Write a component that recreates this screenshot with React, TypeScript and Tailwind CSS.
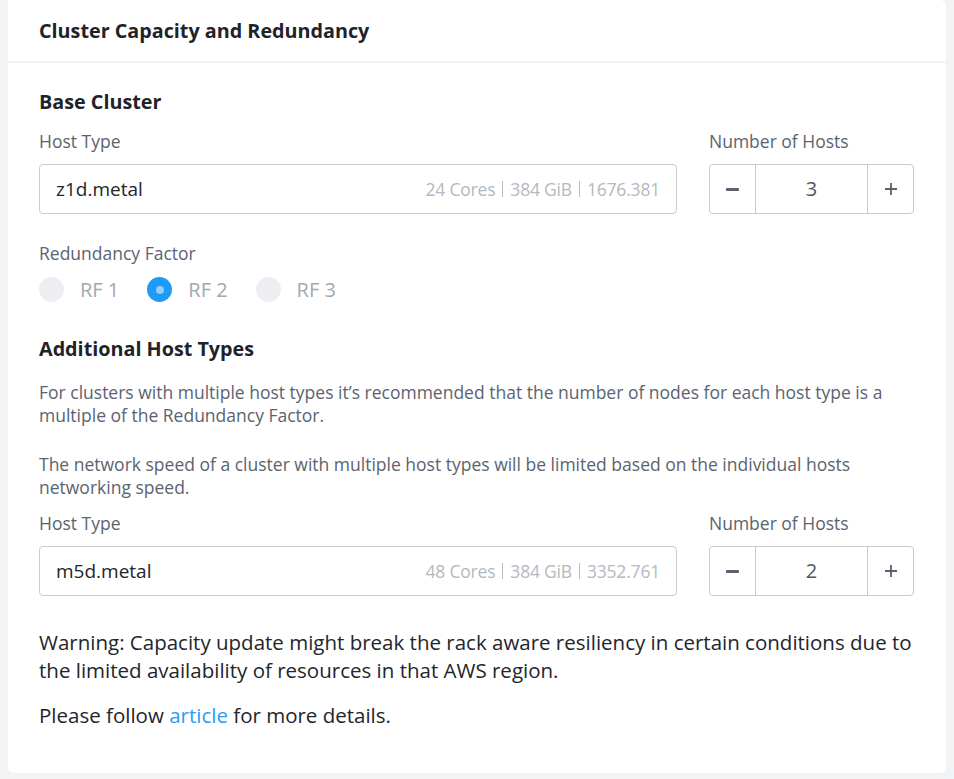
import React from "react";

const font = { fontFamily: "'Open Sans', Lato, Arial, sans-serif" };

function HostRow({ value, info, count }: { value: string; info: string[]; count: number }) {
  return (
    <div className="flex items-start gap-[32px]">
      <div className="flex-1">
        <div className="text-[17.5px] leading-[20px] text-[#5b6370]">Host Type</div>
        <div className="mt-[13px] flex h-[50px] items-center justify-between rounded-[4px] border border-[#c6ccd4] bg-white pl-[16px] pr-[16px]">
          <span className="text-[19px] text-[#22262b]">{value}</span>
          <span className="flex items-center text-[17.5px] tracking-[-0.2px] text-[#b3b9c1]">
            {info.map((t, i) => (
              <React.Fragment key={i}>
                {i > 0 && <span className="mx-[7px] inline-block h-[16px] w-px bg-[#b3b9c1]" />}
                <span>{t}</span>
              </React.Fragment>
            ))}
          </span>
        </div>
      </div>
      <div className="w-[205px]">
        <div className="text-[17.5px] leading-[20px] text-[#5b6370]">Number of Hosts</div>
        <div className="mt-[13px] flex h-[50px] rounded-[4px] border border-[#c6ccd4] bg-white">
          <div className="flex w-[46px] items-center justify-center border-r border-[#c6ccd4]">
            <span className="block h-[3px] w-[13px] rounded-[1px] bg-[#59616d]" />
          </div>
          <div className="flex flex-1 items-center justify-center text-[20px] text-[#4e5661]">{count}</div>
          <div className="flex w-[46px] items-center justify-center border-l border-[#c6ccd4]">
            <svg width="14" height="14" viewBox="0 0 14 14">
              <path d="M7 1v12M1 7h12" stroke="#59616d" strokeWidth="1.8" />
            </svg>
          </div>
        </div>
      </div>
    </div>
  );
}

function Radio({ label, selected }: { label: string; selected?: boolean }) {
  return (
    <div className="flex items-center">
      {selected ? (
        <span className="flex h-[25px] w-[25px] items-center justify-center rounded-full bg-[#1d9bf6]">
          <span className="block h-[8px] w-[8px] rounded-full bg-[#93cdf8]" />
        </span>
      ) : (
        <span className="block h-[25px] w-[25px] rounded-full bg-[#eceef1]" />
      )}
      <span className="ml-[16px] text-[20px] leading-[24px] text-[#a2a8b0]">{label}</span>
    </div>
  );
}

export default function App() {
  return (
    <div className="min-h-[779px] bg-[#f2f3f5] px-[8px] pb-[6px]" style={font}>
      <div className="rounded-b-[6px] rounded-tr-[6px] bg-white">
        <div className="flex h-[61px] items-center pl-[31px] text-[19.75px] font-bold text-[#1f2328]">
          Cluster Capacity and Redundancy
        </div>
        <div className="h-[2px] bg-[#f2f3f5]" />
        <div className="pb-[44px] pl-[31px] pr-[32px] pt-[27px]">
          <div className="text-[19.75px] font-bold leading-[24px] text-[#1f2328]">Base Cluster</div>
          <div className="mt-[17px]">
            <HostRow value="z1d.metal" info={["24 Cores", "384 GiB", "1676.381"]} count={3} />
          </div>
          <div className="mt-[29px] text-[17.5px] leading-[20px] text-[#5b6370]">Redundancy Factor</div>
          <div className="mt-[14px] flex items-center gap-[28px]">
            <Radio label="RF 1" />
            <Radio label="RF 2" selected />
            <Radio label="RF 3" />
          </div>
          <div className="mt-[35px] text-[19.75px] font-bold leading-[24px] text-[#1f2328]">Additional Host Types</div>
          <p className="mt-[20px] text-[17.5px] leading-[23px] text-[#5b6370]">
            For clusters with multiple host types it’s recommended that the number of nodes for each host type is a multiple of the Redundancy Factor.
          </p>
          <p className="mt-[26px] text-[17.5px] leading-[23px] text-[#5b6370]">
            The network speed of a cluster with multiple host types will be limited based on the individual hosts networking speed.
          </p>
          <div className="mt-[14px]">
            <HostRow value="m5d.metal" info={["48 Cores", "384 GiB", "3352.761"]} count={2} />
          </div>
          <p className="mt-[32px] text-[20.5px] leading-[28px] text-[#22262b]">
            Warning: Capacity update might break the rack aware resiliency in certain conditions due to the limited availability of resources in that AWS region.
          </p>
          <p className="mt-[17px] text-[20.5px] leading-[28px] text-[#22262b]">
            Please follow <a className="text-[#2c9cf5]">article</a> for more details.
          </p>
        </div>
      </div>
    </div>
  );
}
